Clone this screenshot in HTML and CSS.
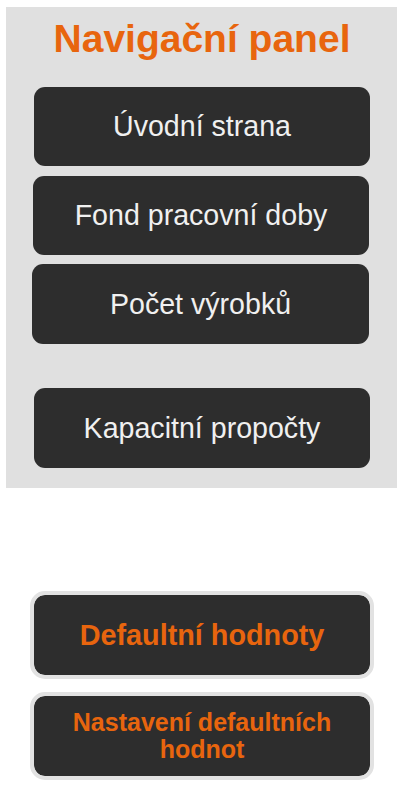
FILE: index.html
```html
<!DOCTYPE html>
<html lang="cs">
<head>
<meta charset="utf-8">
<title>Navigační panel</title>
<link rel="stylesheet" href="styles.css">
</head>
<body>
<div class="page">
  <nav class="panel">
    <h1 class="panel-title">Navigační panel</h1>
    <a class="nav-btn b1" href="#">Úvodní strana</a>
    <a class="nav-btn b2" href="#">Fond pracovní doby</a>
    <a class="nav-btn b3" href="#">Počet výrobků</a>
    <a class="nav-btn b4" href="#">Kapacitní propočty</a>
  </nav>
  <div class="actions">
    <a class="act-btn act-big" href="#">Defaultní hodnoty</a>
    <a class="act-btn act-small" href="#">Nastavení defaultních hodnot</a>
  </div>
</div>
</body>
</html>
```
FILE: styles.css
```css
html, body {
  margin: 0;
  padding: 0;
  background: #ffffff;
}
body {
  font-family: "Liberation Sans", Arial, sans-serif;
}
.page {
  padding: 7px 7px 0 6px;
  display: flex;
  flex-direction: column;
}
.panel {
  width: 391px;
  background: #e0e0e0;
  box-sizing: border-box;
  padding: 10px 27px 20px 28px;
  display: flex;
  flex-direction: column;
}
.panel-title {
  margin: 0 0 26px 0;
  font-size: 39px;
  font-weight: bold;
  color: #e8650e;
  text-align: center;
  line-height: 44px;
}
.nav-btn {
  display: flex;
  align-items: center;
  justify-content: center;
  height: 80px;
  background: #2d2d2d;
  color: #f0f0f0;
  border-radius: 11px;
  text-decoration: none;
  font-size: 28.6px;
}
.b1 { height: 79px; }
.b2 { margin-top: 10px; margin-left: -1px; margin-right: 1px; height: 79px; }
.b3 { margin-top: 9px; margin-left: -2px; margin-right: 1px; }
.b4 { margin-top: 44px; }
.actions {
  margin-top: 103px;
  padding-left: 24px;
  display: flex;
  flex-direction: column;
  gap: 13px;
}
.act-btn {
  width: 344px;
  height: 88px;
  box-sizing: border-box;
  border: 4px solid #e2e2e2;
  border-radius: 15px;
  background: #2d2d2d;
  background-clip: padding-box;
  color: #e8650e;
  font-weight: bold;
  text-decoration: none;
  text-align: center;
  display: flex;
  align-items: center;
  justify-content: center;
}
.act-big {
  font-size: 28.8px;
}
.act-small {
  font-size: 25px;
  line-height: 27px;
  padding: 0 8px;
}
```
